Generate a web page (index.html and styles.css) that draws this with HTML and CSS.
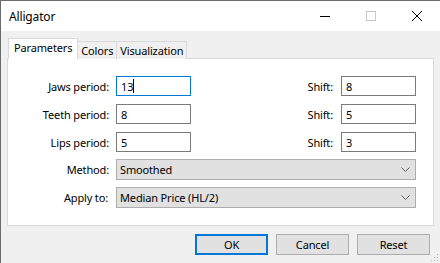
FILE: index.html
```html
<!doctype html>
<html lang="en">
<head>
  <meta charset="utf-8">
  <title>Alligator</title>
  <link rel="stylesheet" href="styles.css">
</head>
<body>
  <div class="window">
    <div class="titlebar">
      <span class="title">Alligator</span>
      <div class="caption">
        <span class="capbtn">
          <svg width="10" height="10" viewBox="0 0 10 10"><path d="M0 5.5H10" stroke="#000" stroke-width="1"/></svg>
        </span>
        <span class="capbtn">
          <svg width="10" height="10" viewBox="0 0 10 10"><rect x="0.5" y="0.5" width="9" height="9" fill="none" stroke="#c8c8c8" stroke-width="1"/></svg>
        </span>
        <span class="capbtn">
          <svg width="10" height="10" viewBox="0 0 10 10"><path d="M0 0L10 10M10 0L0 10" stroke="#000" stroke-width="1"/></svg>
        </span>
      </div>
    </div>

    <div class="content">
      <div class="tabs">
        <span class="tab active">Parameters</span>
        <span class="tab">Colors</span>
        <span class="tab">Visualization</span>
      </div>

      <div class="panel">
        <div class="grid">
          <label class="lbl">Jaws period:</label>
          <div class="field focus">13<span class="caret"></span></div>
          <label class="lbl">Shift:</label>
          <div class="field">8</div>

          <label class="lbl">Teeth period:</label>
          <div class="field">8</div>
          <label class="lbl">Shift:</label>
          <div class="field">5</div>

          <label class="lbl">Lips period:</label>
          <div class="field">5</div>
          <label class="lbl">Shift:</label>
          <div class="field">3</div>
        </div>

        <div class="grid selects">
          <label class="lbl">Method:</label>
          <div class="combo">
            <span>Smoothed</span>
            <svg width="9" height="5" viewBox="0 0 9 5"><path d="M0.5 0.5L4.5 4.5L8.5 0.5" fill="none" stroke="#606060" stroke-width="1"/></svg>
          </div>

          <label class="lbl">Apply to:</label>
          <div class="combo">
            <span>Median Price (HL/2)</span>
            <svg width="9" height="5" viewBox="0 0 9 5"><path d="M0.5 0.5L4.5 4.5L8.5 0.5" fill="none" stroke="#606060" stroke-width="1"/></svg>
          </div>
        </div>
      </div>

      <div class="buttons">
        <span class="btn default">OK</span>
        <span class="btn">Cancel</span>
        <span class="btn">Reset</span>
      </div>
    </div>

    <svg class="grip" width="9" height="9" viewBox="0 0 9 9">
      <rect x="7" y="1" width="1" height="1" fill="#b0b0b0"/>
      <rect x="4" y="4" width="1" height="1" fill="#b0b0b0"/>
      <rect x="7" y="4" width="1" height="1" fill="#b0b0b0"/>
      <rect x="1" y="7" width="1" height="1" fill="#b0b0b0"/>
      <rect x="4" y="7" width="1" height="1" fill="#b0b0b0"/>
      <rect x="7" y="7" width="1" height="1" fill="#b0b0b0"/>
    </svg>
  </div>
</body>
</html>
```

FILE: styles.css
```css
html, body{
  margin: 0;
  padding: 0;
}

body{
  font-family: "Noto Sans", "Open Sans", sans-serif;
  font-size: 11px;
  letter-spacing: -0.15px;
  color: #000;
}

.window{
  position: relative;
  width: 440px;
  height: 263px;
  box-sizing: border-box;
  background-color: #f0f0f0;
  border-top: 1px solid #6b6b6b;
  border-left: 1px solid #6b6b6b;
  overflow: hidden;
}

.titlebar{
  display: flex;
  align-items: center;
  height: 30px;
  background-color: #fff;
}

.title{
  flex: 1;
  padding-left: 8px;
  font-size: 12px;
}

.caption{
  display: flex;
  height: 100%;
}

.capbtn{
  display: flex;
  align-items: center;
  justify-content: center;
  width: 46px;
  height: 100%;
}

.content{
  padding: 7px 6px 0 6px;
}

.tabs{
  display: flex;
  align-items: flex-end;
  padding-left: 1px;
  margin-bottom: -1px;
}

.tab{
  position: relative;
  height: 17px;
  line-height: 17px;
  padding: 0 3px;
  border: 1px solid #d9d9d9;
  border-bottom: none;
  background-color: #f0f0f0;
  margin-left: -1px;
}

.tab.active{
  height: 20px;
  line-height: 18px;
  padding: 0 5px;
  background-color: #fff;
  z-index: 1;
  margin-left: 0;
}

.panel{
  height: 168px;
  box-sizing: border-box;
  background-color: #fff;
  border: 1px solid #d9d9d9;
  padding-top: 17px;
}

.grid{
  display: grid;
  grid-template-columns: 101px 75px 1fr 75px;
  column-gap: 7px;
  row-gap: 8px;
  padding-right: 17px;
}

.selects{
  margin-top: 7px;
  row-gap: 7px;
}

.lbl{
  display: flex;
  align-items: center;
  justify-content: flex-end;
}

.grid .lbl:nth-child(4n+3){
  padding-right: 1px;
}

.field{
  display: flex;
  align-items: center;
  height: 20px;
  box-sizing: border-box;
  border: 1px solid #7a7a7a;
  padding-left: 4px;
}

.field.focus{
  border-color: #0078d7;
}

.caret{
  display: inline-block;
  width: 1px;
  height: 14px;
  background-color: #000;
}

.combo{
  grid-column: 2 / -1;
  display: flex;
  align-items: center;
  justify-content: space-between;
  height: 21px;
  box-sizing: border-box;
  border: 1px solid #adadad;
  background-color: #e1e1e1;
  padding: 0 5px 0 3px;
}

.buttons{
  display: flex;
  justify-content: flex-end;
  gap: 8px;
  margin-top: 8px;
  padding-right: 4px;
}

.btn{
  width: 73px;
  height: 21px;
  box-sizing: border-box;
  display: flex;
  align-items: center;
  justify-content: center;
  border: 1px solid #adadad;
  background-color: #e1e1e1;
}

.btn.default{
  border: 2px solid #0078d7;
}

.grip{
  position: absolute;
  right: 1px;
  bottom: 1px;
}
```
